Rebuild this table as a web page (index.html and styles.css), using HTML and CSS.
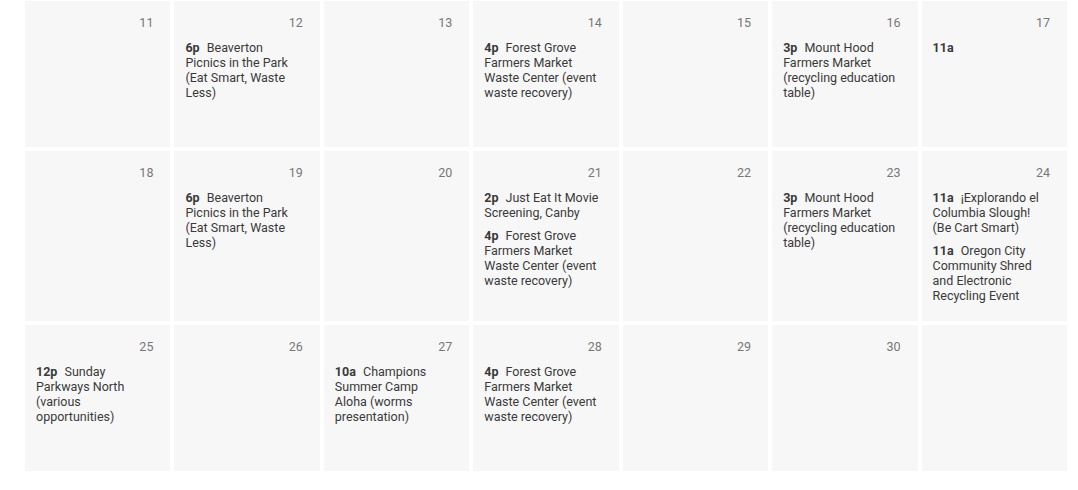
FILE: index.html
```html
<!DOCTYPE html>
<html lang="en">
<head>
<meta charset="utf-8">
<title>Calendar</title>
<link rel="stylesheet" href="styles.css">
</head>
<body>
<div class="calendar">
  <div class="day"><div class="date">11</div></div>
  <div class="day"><div class="date">12</div>
    <div class="event"><b>6p</b> Beaverton Picnics in the Park (Eat Smart, Waste Less)</div></div>
  <div class="day"><div class="date">13</div></div>
  <div class="day"><div class="date">14</div>
    <div class="event"><b>4p</b> Forest Grove Farmers Market Waste Center (event waste recovery)</div></div>
  <div class="day"><div class="date">15</div></div>
  <div class="day"><div class="date">16</div>
    <div class="event"><b>3p</b> Mount Hood Farmers Market (recycling education table)</div></div>
  <div class="day"><div class="date">17</div>
    <div class="event"><b>11a</b></div></div>

  <div class="day"><div class="date">18</div></div>
  <div class="day"><div class="date">19</div>
    <div class="event"><b>6p</b> Beaverton Picnics in the Park (Eat Smart, Waste Less)</div></div>
  <div class="day"><div class="date">20</div></div>
  <div class="day"><div class="date">21</div>
    <div class="event"><b>2p</b> Just Eat It Movie Screening, Canby</div>
    <div class="event"><b>4p</b> Forest Grove Farmers Market Waste Center (event waste recovery)</div></div>
  <div class="day"><div class="date">22</div></div>
  <div class="day"><div class="date">23</div>
    <div class="event"><b>3p</b> Mount Hood Farmers Market (recycling education table)</div></div>
  <div class="day"><div class="date">24</div>
    <div class="event"><b>11a</b> ¡Explorando el Columbia Slough! (Be Cart Smart)</div>
    <div class="event"><b>11a</b> Oregon City Community Shred and Electronic Recycling Event</div></div>

  <div class="day"><div class="date">25</div>
    <div class="event"><b>12p</b> Sunday Parkways North (various opportunities)</div></div>
  <div class="day"><div class="date">26</div></div>
  <div class="day"><div class="date">27</div>
    <div class="event"><b>10a</b> Champions Summer Camp Aloha (worms presentation)</div></div>
  <div class="day"><div class="date">28</div>
    <div class="event"><b>4p</b> Forest Grove Farmers Market Waste Center (event waste recovery)</div></div>
  <div class="day"><div class="date">29</div></div>
  <div class="day"><div class="date">30</div></div>
  <div class="day"></div>
</div>
</body>
</html>
```
FILE: styles.css
```css
html, body {
  margin: 0;
  padding: 0;
  background: #ffffff;
}
body {
  padding-top: 1px;
  font-family: "Roboto", "Liberation Sans", sans-serif;
  font-size: 12.5px;
  line-height: 15px;
  color: #3a3a3a;
}
.calendar {
  margin-left: 25px;
  width: 1042px;
  display: grid;
  grid-template-columns: repeat(7, 1fr);
  gap: 4px;
}
.day {
  background: #f7f7f7;
  min-height: 146px;
  box-sizing: border-box;
  padding: 14px 17px 18px 11px;
}
.date {
  text-align: right;
  color: #777777;
  margin-bottom: 10px;
}
.event + .event {
  margin-top: 8px;
}
.event b {
  font-weight: 700;
  margin-right: 4px;
}
```
